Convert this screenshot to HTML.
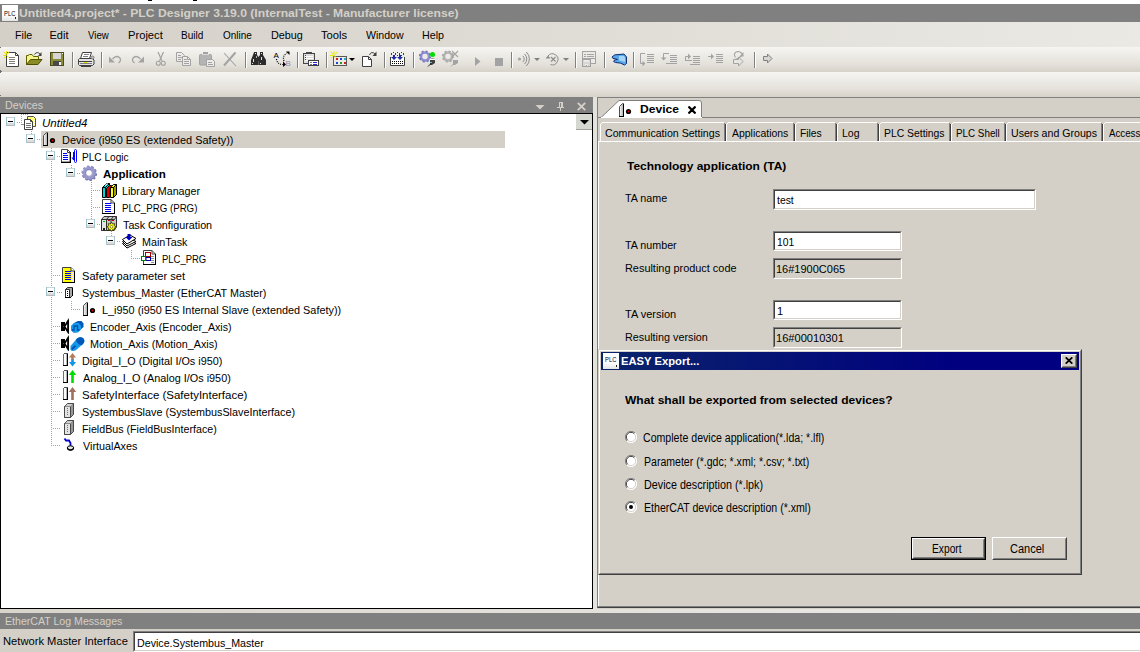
<!DOCTYPE html><html><head><meta charset="utf-8"><title>PLC Designer</title><style>html,body{margin:0;padding:0}body{width:1140px;height:652px;position:relative;overflow:hidden;background:#d4d0c8;font-family:'Liberation Sans',sans-serif;font-size:11px;line-height:13px;color:#000}div,span,svg{position:absolute}</style></head><body>
<div style="position:absolute;left:0px;top:0px;width:1140px;height:4px;background:#fff"></div>
<div style="position:absolute;left:148px;top:0px;width:4px;height:1px;background:#000"></div><div style="position:absolute;left:193px;top:0px;width:4px;height:1px;background:#000"></div>
<div style="position:absolute;left:0px;top:4px;width:1140px;height:18px;background:#808080"></div>
<div style="position:absolute;left:2px;top:5px;width:16px;height:16px;background:linear-gradient(#fff 60%,#e4e4e4)"><span style="left:2.17px;top:2px;font-size:7px;white-space:pre;color:#000;transform:scaleX(0.8333);transform-origin:0 0;">PLC</span><div style="position:absolute;left:13px;top:12px;width:1px;height:2px;background:#222"></div></div>
<span style="left:18.90px;top:7px;font-size:11px;white-space:pre;color:#d4d0c8;transform:scaleX(1.1033);transform-origin:0 0;font-weight:bold;">Untitled4.project* - PLC Designer 3.19.0 (InternalTest - Manufacturer license)</span>
<div style="position:absolute;left:0px;top:22px;width:1140px;height:25px;background:linear-gradient(to right,#d4d0c8,#ebe9e4)"></div>
<span style="left:15.03px;top:29px;font-size:11px;white-space:pre;color:#000;transform:scaleX(0.9688);transform-origin:0 0;">File</span>
<span style="left:49.50px;top:29px;font-size:11px;white-space:pre;color:#000;transform:scaleX(1.0000);transform-origin:0 0;">Edit</span>
<span style="left:88.00px;top:29px;font-size:11px;white-space:pre;color:#000;transform:scaleX(0.8750);transform-origin:0 0;">View</span>
<span style="left:127.98px;top:29px;font-size:11px;white-space:pre;color:#000;transform:scaleX(1.0152);transform-origin:0 0;">Project</span>
<span style="left:181.09px;top:29px;font-size:11px;white-space:pre;color:#000;transform:scaleX(0.9130);transform-origin:0 0;">Build</span>
<span style="left:223.00px;top:29px;font-size:11px;white-space:pre;color:#000;transform:scaleX(0.9062);transform-origin:0 0;">Online</span>
<span style="left:270.52px;top:29px;font-size:11px;white-space:pre;color:#000;transform:scaleX(0.9839);transform-origin:0 0;">Debug</span>
<span style="left:321.00px;top:29px;font-size:11px;white-space:pre;color:#000;transform:scaleX(1.0200);transform-origin:0 0;">Tools</span>
<span style="left:365.50px;top:29px;font-size:11px;white-space:pre;color:#000;transform:scaleX(0.9615);transform-origin:0 0;">Window</span>
<span style="left:421.52px;top:29px;font-size:11px;white-space:pre;color:#000;transform:scaleX(0.9762);transform-origin:0 0;">Help</span>
<div style="position:absolute;left:0px;top:47px;width:1140px;height:25px;background:linear-gradient(to bottom,#f6f5f2,#e4e1da 70%,#d6d2ca)"></div>
<div style="position:absolute;left:0px;top:72px;width:1140px;height:25px;background:linear-gradient(to bottom,#f6f5f2,#e4e1da 70%,#d6d2ca)"></div>
<div style="position:absolute;left:72px;top:52px;width:1px;height:16px;background:#808080"></div><div style="position:absolute;left:73px;top:52px;width:1px;height:16px;background:#fff"></div><div style="position:absolute;left:101px;top:52px;width:1px;height:16px;background:#808080"></div><div style="position:absolute;left:102px;top:52px;width:1px;height:16px;background:#fff"></div><div style="position:absolute;left:245px;top:52px;width:1px;height:16px;background:#808080"></div><div style="position:absolute;left:246px;top:52px;width:1px;height:16px;background:#fff"></div><div style="position:absolute;left:297px;top:52px;width:1px;height:16px;background:#808080"></div><div style="position:absolute;left:298px;top:52px;width:1px;height:16px;background:#fff"></div><div style="position:absolute;left:326px;top:52px;width:1px;height:16px;background:#808080"></div><div style="position:absolute;left:327px;top:52px;width:1px;height:16px;background:#fff"></div><div style="position:absolute;left:384px;top:52px;width:1px;height:16px;background:#808080"></div><div style="position:absolute;left:385px;top:52px;width:1px;height:16px;background:#fff"></div><div style="position:absolute;left:413px;top:52px;width:1px;height:16px;background:#808080"></div><div style="position:absolute;left:414px;top:52px;width:1px;height:16px;background:#fff"></div><div style="position:absolute;left:511px;top:52px;width:1px;height:16px;background:#808080"></div><div style="position:absolute;left:512px;top:52px;width:1px;height:16px;background:#fff"></div><div style="position:absolute;left:575px;top:52px;width:1px;height:16px;background:#808080"></div><div style="position:absolute;left:576px;top:52px;width:1px;height:16px;background:#fff"></div><div style="position:absolute;left:604px;top:52px;width:1px;height:16px;background:#808080"></div><div style="position:absolute;left:605px;top:52px;width:1px;height:16px;background:#fff"></div><div style="position:absolute;left:633px;top:52px;width:1px;height:16px;background:#808080"></div><div style="position:absolute;left:634px;top:52px;width:1px;height:16px;background:#fff"></div><div style="position:absolute;left:754px;top:52px;width:1px;height:16px;background:#808080"></div><div style="position:absolute;left:755px;top:52px;width:1px;height:16px;background:#fff"></div><svg style="position:absolute;left:0;top:47px" width="1140" height="25" viewBox="0 47 1140 25"><g shape-rendering="auto"><path d="M6.5 52.5 H15.5 L18.5 55.5 V66.5 H6.5Z" fill="#fff" stroke="#404040"/><path d="M15.5 52.5 V55.5 H18.5" fill="none" stroke="#404040"/><rect x="9" y="57" width="6" height="1" fill="#808080"/><rect x="9" y="59" width="6" height="1" fill="#808080"/><rect x="9" y="61" width="6" height="1" fill="#808080"/><rect x="9" y="63" width="6" height="1" fill="#808080"/><path d="M3.5 51.5 L8.5 57.5 M6.5 51 V54 M9.5 51.5 L7 54.5 M3 55.5 H6 M3.5 58.5 L5.5 56.5" stroke="#e6e600" stroke-width="1" fill="none"/><path d="M26.5 64.5 V55.5 H28 L29.5 54.5 H32 L33.5 56.5 H38.5 V59" fill="#f4f48c" stroke="#606000"/><path d="M26.5 64.5 L30.5 59.5 H42 L38 64.5Z" fill="#8c8c28" stroke="#505000"/><path d="M34.5 54.5 Q37 50.5 40.5 54.5" fill="none" stroke="#404040"/><path d="M41.5 52 V56 H38Z" fill="#404040"/><rect x="50" y="52" width="14" height="14" fill="#4c4c18"/><rect x="51" y="53" width="12" height="12" fill="#8c8c38"/><rect x="53" y="53" width="8" height="6" fill="#d6d6d6"/><rect x="53" y="61" width="8" height="5" fill="#484848"/><rect x="59" y="62" width="2" height="3" fill="#f0f0f0"/><rect x="62" y="53" width="1" height="1" fill="#fff"/><path d="M82.5 52.5 H91.5 L89.5 58.5 H80.5Z" fill="#fff" stroke="#404040"/><rect x="84" y="54" width="5" height="1" fill="#808080"/><rect x="83" y="56" width="5" height="1" fill="#808080"/><path d="M79.5 58.5 H92.5 L94 60 V64 L92.5 65.5 H79.5 L78.5 64.5 V59.5Z" fill="#e4e4e4" stroke="#404040"/><rect x="79" y="61" width="13" height="1" fill="#404040"/><rect x="84" y="62" width="3" height="1" fill="#e8e000"/><rect x="80" y="63" width="12" height="1" fill="#808080"/><rect x="81" y="66" width="10" height="1" fill="#404040"/><circle cx="92.5" cy="57.5" r="1.5" fill="#c0c0c0" stroke="#606060" stroke-width=".7"/><path d="M109 56.5 V62.5 H115Z" fill="#a3a3a3"/><path d="M112.5 59 Q116 55 119.5 57.5 Q122 60.5 118.5 63" fill="none" stroke="#a3a3a3" stroke-width="1.3"/><path d="M144 56.5 V62.5 H138Z" fill="#a3a3a3"/><path d="M140.5 59 Q137 55 133.5 57.5 Q131 60.5 134.5 63" fill="none" stroke="#a3a3a3" stroke-width="1.3"/><path d="M158 52 L162 61 M163.5 52 L159.5 61" stroke="#a3a3a3" stroke-width="1.2" fill="none"/><circle cx="158.3" cy="63.3" r="2" fill="none" stroke="#a3a3a3" stroke-width="1.1"/><circle cx="163.3" cy="63.3" r="2" fill="none" stroke="#a3a3a3" stroke-width="1.1"/><path d="M176.5 52.5 H181.5 L184.5 55.5 V61.5 H176.5Z" fill="#ecebe8" stroke="#a3a3a3"/><path d="M182.5 56.5 H187.5 L190.5 59.5 V65.5 H182.5Z" fill="#ecebe8" stroke="#a3a3a3"/><rect x="178" y="55" width="3" height="1" fill="#a3a3a3"/><rect x="178" y="57" width="4" height="1" fill="#a3a3a3"/><rect x="178" y="59" width="3" height="1" fill="#a3a3a3"/><rect x="184" y="59" width="3" height="1" fill="#a3a3a3"/><rect x="184" y="61" width="5" height="1" fill="#a3a3a3"/><rect x="184" y="63" width="5" height="1" fill="#a3a3a3"/><path d="M187.5 56.5 V59.5 H190.5" fill="none" stroke="#a3a3a3"/><rect x="199.5" y="54.5" width="12" height="10.5" rx="1" fill="#b4b4b4" stroke="#a3a3a3"/><rect x="203" y="52" width="5" height="2" fill="#a3a3a3"/><rect x="202" y="54" width="7" height="1" fill="#d8d8d8"/><path d="M206.500 59.5 H212.5 L214.5 61.5 V66.5 H206.5Z" fill="#ecebe8" stroke="#a3a3a3"/><rect x="208" y="62" width="4" height="1" fill="#a3a3a3"/><rect x="208" y="64" width="5" height="1" fill="#a3a3a3"/><path d="M224 53 L236 66" stroke="#a3a3a3" stroke-width="1.1"/><path d="M235.5 52.5 L224 65.5" stroke="#a3a3a3" stroke-width="2"/><path d="M254 52 h3 v3 l1.500 2 v8 h-7.500 v-5 l2 -5z" fill="#2c2c2c"/><path d="M260 52 h3 v3 l3 5 v5 h-7.500 v-8 l1.500 -2z" fill="#2c2c2c"/><rect x="257" y="57" width="3" height="4" fill="#2c2c2c"/><rect x="253" y="59" width="1" height="3" fill="#e0e0e0"/><rect x="255" y="53" width="1" height="1" fill="#e0e0e0"/><rect x="261" y="53" width="1" height="1" fill="#e0e0e0"/><rect x="261" y="57" width="1" height="3" fill="#e0e0e0"/><rect x="252" y="63" width="1" height="1" fill="#e0e0e0"/><rect x="260" y="63" width="1" height="1" fill="#e0e0e0"/><rect x="256" y="56" width="1" height="2" fill="#b0b0b0"/><text x="273.500" y="58" font-size="8" font-family="Liberation Sans, sans-serif" fill="#000">A</text><text x="285.500" y="66" font-size="8" font-family="Liberation Sans, sans-serif" fill="#9090b0">B</text><path d="M276.500 59 Q277 64.500 283 64.500" fill="none" stroke="#000" stroke-width="1.2" stroke-dasharray="1 1.2"/><path d="M283 61.500 L286 64.500 L283 67Z" fill="#000"/><path d="M284 61 Q282 56 287 53" fill="none" stroke="#000" stroke-width="1.2" stroke-dasharray="1 1.2"/><path d="M286 51.500 H289.500 V55Z" fill="#000"/><rect x="303.500" y="53.500" width="11" height="10" fill="#dcdcdc" stroke="#484848"/><rect x="306" y="52" width="6" height="2" fill="#484848"/><rect x="305" y="56" width="8" height="1" fill="#fff"/><rect x="305" y="58" width="8" height="1" fill="#fff"/><rect x="305" y="60" width="3" height="1" fill="#fff"/><rect x="305" y="55" width="1" height="1" fill="#484848"/><rect x="305" y="57" width="1" height="1" fill="#484848"/><rect x="305" y="59" width="1" height="1" fill="#484848"/><rect x="308.500" y="60.500" width="10" height="5" fill="#fff" stroke="#404040"/><rect x="310" y="62" width="2" height="1" fill="#808080"/><rect x="313" y="62" width="4" height="1" fill="#2828c8"/><rect x="310" y="64" width="2" height="1" fill="#808080"/><rect x="313" y="64" width="4" height="1" fill="#2828c8"/><rect x="333.500" y="56.500" width="13" height="9" fill="#ecebe8" stroke="#585858"/><rect x="336" y="58" width="2" height="2" fill="#d02020"/><rect x="340" y="58" width="2" height="2" fill="#2040d0"/><rect x="344" y="58" width="2" height="2" fill="#20b0c0"/><rect x="336" y="62" width="2" height="2" fill="#2040d0"/><rect x="340" y="62" width="2" height="2" fill="#20a020"/><rect x="344" y="62" width="2" height="2" fill="#d02020"/><path d="M330.500 51.500 L336 57.500 M334 51 V54.500 M337.500 51.500 L335 54.500 M330 55.500 H333.500 M331 58.500 L333 56.500" stroke="#e6e600" stroke-width="1" fill="none"/><path d="M349 58 H355 L352 61Z" fill="#000"/><path d="M362.500 56.500 H368.500 L371.500 59.500 V66.500 H362.500Z" fill="#fff" stroke="#404040"/><path d="M368.500 56.500 V59.500 H371.500" fill="none" stroke="#404040"/><path d="M369.500 55 Q371.500 50.500 375 54" fill="none" stroke="#404040"/><path d="M376.500 51.500 V56 H372.500Z" fill="#404040"/><rect x="391" y="53" width="1" height="1" fill="#2030c0"/><rect x="391" y="54" width="1" height="1" fill="#2030c0"/><rect x="393" y="52" width="1" height="1" fill="#2030c0"/><rect x="393" y="55" width="1" height="1" fill="#2030c0"/><rect x="395" y="53" width="1" height="1" fill="#2030c0"/><rect x="395" y="54" width="1" height="1" fill="#2030c0"/><rect x="397" y="52" width="1" height="1" fill="#2030c0"/><rect x="397" y="55" width="1" height="1" fill="#2030c0"/><rect x="399" y="53" width="1" height="1" fill="#2030c0"/><rect x="399" y="54" width="1" height="1" fill="#2030c0"/><rect x="401" y="52" width="1" height="1" fill="#2030c0"/><rect x="401" y="55" width="1" height="1" fill="#2030c0"/><rect x="403" y="53" width="1" height="1" fill="#2030c0"/><rect x="403" y="54" width="1" height="1" fill="#2030c0"/><path d="M393 55 h2 v2 h2 l-3 3 l-3 -3 h2z M399 55 h2 v2 h2 l-3 3 l-3 -3 h2z" fill="#1c2ca8"/><path d="M390.500 57 V65.500 H404.500 V57" fill="#fff" stroke="#404040"/><path d="M393 55 h2 v2 h2 l-3 3 l-3 -3 h2z M399 55 h2 v2 h2 l-3 3 l-3 -3 h2z" fill="#1c2ca8"/><rect x="392" y="61" width="1" height="1" fill="#000"/><rect x="394" y="61" width="1" height="1" fill="#000"/><rect x="396" y="61" width="1" height="1" fill="#000"/><rect x="398" y="61" width="1" height="1" fill="#000"/><rect x="400" y="61" width="1" height="1" fill="#000"/><rect x="402" y="61" width="1" height="1" fill="#000"/><rect x="392" y="63" width="1" height="1" fill="#000"/><rect x="394" y="63" width="1" height="1" fill="#000"/><rect x="396" y="63" width="1" height="1" fill="#000"/><rect x="398" y="63" width="1" height="1" fill="#000"/><rect x="400" y="63" width="1" height="1" fill="#000"/><rect x="402" y="63" width="1" height="1" fill="#000"/><circle cx="425" cy="56.5" r="4" fill="none" stroke="#8e8ed0" stroke-width="2.600"/><circle cx="425" cy="56.5" r="5.300" fill="none" stroke="#7878c0" stroke-width="1.600" stroke-dasharray="2.080 2.080"/><circle cx="432.500" cy="54.500" r="2.500" fill="#00e000"/><rect x="430" y="58" width="5" height="2" fill="#fff"/><path d="M430.500 58.500 H434.500" stroke="#606060" stroke-width=".6"/><path d="M430 60 H435 V63 L432 65 H430Z" fill="#404040"/><path d="M428 66.500 L432 62.500" stroke="#202020" stroke-width="1"/><rect x="430" y="62" width="2" height="1" fill="#60c0c0"/><circle cx="448" cy="56.5" r="4" fill="none" stroke="#b4b4b4" stroke-width="2.600"/><circle cx="448" cy="56.5" r="5.300" fill="none" stroke="#a8a8a8" stroke-width="1.600" stroke-dasharray="2.080 2.080"/><path d="M452 51 L458 57 M458 51 L452 57" stroke="#a3a3a3" stroke-width="1.1"/><rect x="453" y="58" width="5" height="2" fill="#e8e8e8"/><path d="M453 60 H458 V63 L455 65 H453Z" fill="#a3a3a3"/><path d="M451 66.500 L455 62.500" stroke="#a3a3a3" stroke-width="1"/><path d="M475 57 L480.500 61.500 L475 66Z" fill="#a3a3a3"/><rect x="495" y="58" width="8" height="8" fill="#a3a3a3"/><circle cx="519.500" cy="59" r="1.600" fill="#a3a3a3"/><path d="M522.81 55.88 A4.2 4.2 0 0 1 522.81 62.12" fill="none" stroke="#8c8c8c" stroke-width="1"/><path d="M524.55 53.95 A6.8 6.8 0 0 1 524.55 64.05" fill="none" stroke="#8c8c8c" stroke-width="1"/><path d="M526.29 52.01 A9.4 9.4 0 0 1 526.29 65.99" fill="none" stroke="#8c8c8c" stroke-width="1"/><path d="M534 58 H540 L537 61Z" fill="#808080"/><path d="M563 58 H569 L566 61Z" fill="#808080"/><path d="M548 56 A5.500 5.500 0 1 1 550.500 64.500" fill="none" stroke="#8c8c8c" stroke-width="1"/><path d="M545.500 58.500 H550.500 L548 55.500Z" fill="#8c8c8c"/><path d="M551 57 L555.500 61.500 M555.500 57 L551 61.500" stroke="#8c8c8c" stroke-width="1.100"/><rect x="582.500" y="51.500" width="13" height="12" fill="#eceae6" stroke="#a3a3a3"/><rect x="584" y="54" width="2" height="1" fill="#a3a3a3"/><rect x="587" y="54" width="7" height="1" fill="#a3a3a3"/><rect x="584" y="56" width="2" height="1" fill="#a3a3a3"/><rect x="587" y="56" width="7" height="1" fill="#a3a3a3"/><rect x="583" y="58" width="13" height="1" fill="#a3a3a3"/><rect x="582.500" y="59.500" width="8" height="7" fill="#d8d6d2" stroke="#a3a3a3"/><rect x="584" y="60" width="5" height="2" fill="#eceae6"/><rect x="585" y="64" width="3" height="2" fill="#eceae6"/><rect x="586" y="65" width="1" height="1" fill="#a3a3a3"/><path d="M612 57 Q614 54 619 54.500 L624 54 L626.500 57 V63.500 L624.500 65 Q621 62.500 615.500 62.500 Q612.500 62 614.500 60 L617.500 59.500 Q615.500 58.500 613 58.500Z" fill="#58a8e8" stroke="#0c2c78" stroke-width="1"/><path d="M619 56 H624 L625 58 V62 Q621 60.500 619 60.500Z" fill="#a8d4f4"/><path d="M645 53.500 H640.500 V63.500 H643" fill="none" stroke="#a3a3a3"/><path d="M642.500 61 L645.500 63.500 L642.500 66.500Z" fill="#a3a3a3"/><rect x="647" y="54" width="7" height="1" fill="#a3a3a3"/><rect x="647" y="56" width="7" height="1" fill="#a3a3a3"/><rect x="647" y="58" width="7" height="1" fill="#a3a3a3"/><rect x="647" y="60" width="7" height="1" fill="#a3a3a3"/><rect x="647" y="62" width="7" height="1" fill="#a3a3a3"/><path d="M669 53.500 H663.500 V58" fill="none" stroke="#a3a3a3"/><path d="M661 57.500 H666.500 L663.500 60.500Z" fill="#a3a3a3"/><rect x="670" y="55" width="7" height="1" fill="#a3a3a3"/><rect x="670" y="57" width="7" height="1" fill="#a3a3a3"/><rect x="670" y="59" width="7" height="1" fill="#a3a3a3"/><rect x="670" y="61" width="7" height="1" fill="#a3a3a3"/><rect x="666" y="63" width="11" height="1" fill="#a3a3a3"/><path d="M685.500 60.500 V56.500 H689" fill="none" stroke="#a3a3a3"/><path d="M688 53.500 L691 56.500 L688 59.500Z" fill="#a3a3a3"/><rect x="685" y="60" width="7" height="1" fill="#a3a3a3"/><rect x="693" y="56" width="7" height="1" fill="#a3a3a3"/><rect x="693" y="58" width="7" height="1" fill="#a3a3a3"/><rect x="693" y="60" width="7" height="1" fill="#a3a3a3"/><rect x="693" y="62" width="7" height="1" fill="#a3a3a3"/><rect x="690" y="64" width="10" height="1" fill="#a3a3a3"/><path d="M708 56.500 H712" stroke="#a3a3a3"/><path d="M711 53.500 L714 56.500 L711 59.500Z" fill="#a3a3a3"/><rect x="716" y="54" width="7" height="1" fill="#a3a3a3"/><rect x="716" y="56" width="7" height="1" fill="#a3a3a3"/><rect x="716" y="58" width="7" height="1" fill="#a3a3a3"/><rect x="716" y="60" width="7" height="1" fill="#a3a3a3"/><rect x="716" y="62" width="7" height="1" fill="#a3a3a3"/><path d="M735.500 57.500 Q732.500 53 737.500 51.500 Q741 51.500 742 54" fill="none" stroke="#a3a3a3" stroke-width="1.100"/><path d="M743.500 52 V56.500 H739.500Z" fill="#a3a3a3"/><path d="M741.500 56 L736 59.500" stroke="#a3a3a3" stroke-width="1.100"/><path d="M733.500 59.500 H738.500 V57 L743 61.500 L738.500 66 V63.500 H733.500Z" fill="#e8e6e2" stroke="#a3a3a3"/><path d="M763.500 56.500 H767.500 V54 L772 58.500 L767.500 63 V60.500 H763.500Z" fill="#d8d6d2" stroke="#808080"/></g></svg>
<div style="position:absolute;left:0px;top:47px;width:1px;height:1px;background:#707070"></div><div style="position:absolute;left:0px;top:70px;width:1px;height:3px;background:#707070"></div><div style="position:absolute;left:1px;top:71px;width:1px;height:1px;background:#707070"></div><div style="position:absolute;left:0px;top:95px;width:1px;height:1px;background:#707070"></div>
<div style="position:absolute;left:0px;top:97px;width:593px;height:16px;background:#808080"></div>
<span style="left:5.03px;top:99px;font-size:11px;white-space:pre;color:#d4d0c8;transform:scaleX(0.9737);transform-origin:0 0;">Devices</span>
<div style="position:absolute;left:0px;top:113px;width:593px;height:496px;background:#fff;box-sizing:border-box;border:1px solid #000"></div>
<div style="position:absolute;left:41px;top:131px;width:464px;height:17px;background:#d4d0c8"></div><div style="position:absolute;left:21px;top:114px;width:7px;height:1px;background:repeating-linear-gradient(to right,#a4a4a4 0 1px,transparent 1px 2px)"></div><div style="position:absolute;left:21px;top:116px;width:1px;height:8px;background:repeating-linear-gradient(to bottom,#a4a4a4 0 1px,transparent 1px 2px)"></div><div style="position:absolute;left:21px;top:124px;width:4px;height:1px;background:#909090"></div><div style="position:absolute;left:17px;top:122px;width:5px;height:1px;background:repeating-linear-gradient(to right,#a4a4a4 0 1px,transparent 1px 2px)"></div><div style="position:absolute;left:31px;top:131px;width:1px;height:3px;background:repeating-linear-gradient(to bottom,#a4a4a4 0 1px,transparent 1px 2px)"></div><div style="position:absolute;left:37px;top:139px;width:5px;height:1px;background:repeating-linear-gradient(to right,#a4a4a4 0 1px,transparent 1px 2px)"></div><div style="position:absolute;left:51px;top:148px;width:1px;height:3px;background:repeating-linear-gradient(to bottom,#a4a4a4 0 1px,transparent 1px 2px)"></div><div style="position:absolute;left:51px;top:161px;width:1px;height:286px;background:repeating-linear-gradient(to bottom,#a4a4a4 0 1px,transparent 1px 2px)"></div><div style="position:absolute;left:57px;top:156px;width:4px;height:1px;background:repeating-linear-gradient(to right,#a4a4a4 0 1px,transparent 1px 2px)"></div><div style="position:absolute;left:71px;top:165px;width:1px;height:3px;background:repeating-linear-gradient(to bottom,#a4a4a4 0 1px,transparent 1px 2px)"></div><div style="position:absolute;left:77px;top:173px;width:4px;height:1px;background:repeating-linear-gradient(to right,#a4a4a4 0 1px,transparent 1px 2px)"></div><div style="position:absolute;left:91px;top:182px;width:1px;height:37px;background:repeating-linear-gradient(to bottom,#a4a4a4 0 1px,transparent 1px 2px)"></div><div style="position:absolute;left:93px;top:190px;width:8px;height:1px;background:repeating-linear-gradient(to right,#a4a4a4 0 1px,transparent 1px 2px)"></div><div style="position:absolute;left:93px;top:207px;width:8px;height:1px;background:repeating-linear-gradient(to right,#a4a4a4 0 1px,transparent 1px 2px)"></div><div style="position:absolute;left:97px;top:224px;width:4px;height:1px;background:repeating-linear-gradient(to right,#a4a4a4 0 1px,transparent 1px 2px)"></div><div style="position:absolute;left:111px;top:233px;width:1px;height:3px;background:repeating-linear-gradient(to bottom,#a4a4a4 0 1px,transparent 1px 2px)"></div><div style="position:absolute;left:117px;top:241px;width:4px;height:1px;background:repeating-linear-gradient(to right,#a4a4a4 0 1px,transparent 1px 2px)"></div><div style="position:absolute;left:131px;top:250px;width:1px;height:9px;background:repeating-linear-gradient(to bottom,#a4a4a4 0 1px,transparent 1px 2px)"></div><div style="position:absolute;left:131px;top:258px;width:10px;height:1px;background:repeating-linear-gradient(to right,#a4a4a4 0 1px,transparent 1px 2px)"></div><div style="position:absolute;left:53px;top:275px;width:8px;height:1px;background:repeating-linear-gradient(to right,#a4a4a4 0 1px,transparent 1px 2px)"></div><div style="position:absolute;left:53px;top:326px;width:8px;height:1px;background:repeating-linear-gradient(to right,#a4a4a4 0 1px,transparent 1px 2px)"></div><div style="position:absolute;left:53px;top:343px;width:8px;height:1px;background:repeating-linear-gradient(to right,#a4a4a4 0 1px,transparent 1px 2px)"></div><div style="position:absolute;left:53px;top:360px;width:8px;height:1px;background:repeating-linear-gradient(to right,#a4a4a4 0 1px,transparent 1px 2px)"></div><div style="position:absolute;left:53px;top:377px;width:8px;height:1px;background:repeating-linear-gradient(to right,#a4a4a4 0 1px,transparent 1px 2px)"></div><div style="position:absolute;left:53px;top:394px;width:8px;height:1px;background:repeating-linear-gradient(to right,#a4a4a4 0 1px,transparent 1px 2px)"></div><div style="position:absolute;left:53px;top:411px;width:8px;height:1px;background:repeating-linear-gradient(to right,#a4a4a4 0 1px,transparent 1px 2px)"></div><div style="position:absolute;left:53px;top:428px;width:8px;height:1px;background:repeating-linear-gradient(to right,#a4a4a4 0 1px,transparent 1px 2px)"></div><div style="position:absolute;left:53px;top:445px;width:8px;height:1px;background:repeating-linear-gradient(to right,#a4a4a4 0 1px,transparent 1px 2px)"></div><div style="position:absolute;left:57px;top:292px;width:6px;height:1px;background:repeating-linear-gradient(to right,#a4a4a4 0 1px,transparent 1px 2px)"></div><div style="position:absolute;left:71px;top:301px;width:1px;height:9px;background:repeating-linear-gradient(to bottom,#a4a4a4 0 1px,transparent 1px 2px)"></div><div style="position:absolute;left:71px;top:309px;width:10px;height:1px;background:repeating-linear-gradient(to right,#a4a4a4 0 1px,transparent 1px 2px)"></div><svg style="position:absolute;left:6px;top:117px" width="9" height="9" viewBox="0 0 9 9" shape-rendering="crispEdges" ><rect x="0" y="0" width="9" height="9" fill="#a4c4cc"/><rect x="1" y="0" width="7" height="1" fill="#c4d8dc"/><rect x="1" y="8" width="7" height="1" fill="#b4b8b8"/><rect x="1" y="1" width="7" height="7" fill="#fff"/><rect x="1" y="5" width="7" height="1" fill="#f0f0f0"/><rect x="1" y="6" width="7" height="2" fill="#dcdcdc"/><rect x="2" y="4" width="5" height="1" fill="#000"/></svg><svg style="position:absolute;left:21px;top:114px" width="16" height="16" viewBox="0 0 16 16" shape-rendering="crispEdges" ><g shape-rendering="auto"><path d="M6.500 2.500 H12.500 L14.500 4.500 V12.500 H6.500Z" fill="#ffff70" stroke="#505050"/></g><g shape-rendering="auto"><path d="M3.500 5.500 H9.500 L11.500 7.500 V15.500 H3.500Z" fill="#fff" stroke="#404040"/><path d="M9.500 5.500 V7.500 H11.500" fill="none" stroke="#404040"/></g><rect x="5" y="9" width="5" height="1" fill="#707070"/><rect x="5" y="11" width="5" height="1" fill="#707070"/><rect x="5" y="13" width="5" height="1" fill="#707070"/><rect x="8" y="3" width="1" height="1" fill="#fff"/><rect x="10" y="3" width="1" height="1" fill="#fff"/><rect x="12" y="5" width="1" height="1" fill="#fff"/><rect x="13" y="6" width="1" height="1" fill="#fff"/><rect x="12" y="7" width="1" height="1" fill="#fff"/><rect x="13" y="8" width="1" height="1" fill="#fff"/><rect x="12" y="9" width="1" height="1" fill="#fff"/><rect x="13" y="10" width="1" height="1" fill="#fff"/></svg><span style="left:41.95px;top:117px;font-size:11px;white-space:pre;color:#000;transform:scaleX(1.0476);transform-origin:0 0;font-style:italic;">Untitled4</span><svg style="position:absolute;left:26px;top:134px" width="9" height="9" viewBox="0 0 9 9" shape-rendering="crispEdges" ><rect x="0" y="0" width="9" height="9" fill="#a4c4cc"/><rect x="1" y="0" width="7" height="1" fill="#c4d8dc"/><rect x="1" y="8" width="7" height="1" fill="#b4b8b8"/><rect x="1" y="1" width="7" height="7" fill="#fff"/><rect x="1" y="5" width="7" height="1" fill="#f0f0f0"/><rect x="1" y="6" width="7" height="2" fill="#dcdcdc"/><rect x="2" y="4" width="5" height="1" fill="#000"/></svg><svg style="position:absolute;left:41px;top:131px" width="16" height="16" viewBox="0 0 16 16" shape-rendering="crispEdges" ><defs><linearGradient id="gd" x1="0" x2="1" y1="0" y2="0"><stop offset="0" stop-color="#fff"/><stop offset="1" stop-color="#a8a8a8"/></linearGradient></defs><g shape-rendering="auto"><path d="M2.5 4.500 L5.5 1.500 H6.5 V14.500 H2.5Z" fill="url(#gd)" stroke="#505050" stroke-width="1"/></g><rect x="6" y="2" width="1" height="13" fill="#000"/><rect x="2" y="14" width="5" height="1" fill="#000"/><g shape-rendering="auto"><circle cx="11.5" cy="9.500" r="2.600" fill="#000"/><circle cx="11.5" cy="9.500" r="0.900" fill="#f00000"/></g></svg><span style="left:62.01px;top:134px;font-size:11px;white-space:pre;color:#000;transform:scaleX(0.9942);transform-origin:0 0;">Device (i950 ES (extended Safety))</span><svg style="position:absolute;left:46px;top:151px" width="9" height="9" viewBox="0 0 9 9" shape-rendering="crispEdges" ><rect x="0" y="0" width="9" height="9" fill="#a4c4cc"/><rect x="1" y="0" width="7" height="1" fill="#c4d8dc"/><rect x="1" y="8" width="7" height="1" fill="#b4b8b8"/><rect x="1" y="1" width="7" height="7" fill="#fff"/><rect x="1" y="5" width="7" height="1" fill="#f0f0f0"/><rect x="1" y="6" width="7" height="2" fill="#dcdcdc"/><rect x="2" y="4" width="5" height="1" fill="#000"/></svg><svg style="position:absolute;left:61px;top:148px" width="16" height="16" viewBox="0 0 16 16" shape-rendering="crispEdges" ><g shape-rendering="auto"><path d="M0.500 1.500 H6.500 L9 4 V14 H0.500Z" fill="#fff" stroke="#404040"/><path d="M6.500 1.500 V4.500 H9.500" fill="none" stroke="#404040"/></g><rect x="9" y="4" width="1" height="11" fill="#000"/><rect x="0" y="14" width="10" height="1" fill="#000"/><rect x="2" y="5" width="4" height="1" fill="#0000ff"/><rect x="2" y="7" width="5" height="1" fill="#0000ff"/><rect x="2" y="9" width="5" height="1" fill="#0000ff"/><rect x="2" y="11" width="5" height="1" fill="#0000ff"/><g shape-rendering="auto"><rect x="13.500" y="1.500" width="2" height="13" rx="1" fill="#fff" stroke="#0000ff"/><path d="M10.500 9.500 L12.500 12.500 L13 9.500Z" fill="#0000ff"/></g><rect x="12" y="4" width="1" height="8" fill="#0000ff"/></svg><span style="left:82.08px;top:151px;font-size:11px;white-space:pre;color:#000;transform:scaleX(0.9184);transform-origin:0 0;">PLC Logic</span><svg style="position:absolute;left:66px;top:168px" width="9" height="9" viewBox="0 0 9 9" shape-rendering="crispEdges" ><rect x="0" y="0" width="9" height="9" fill="#a4c4cc"/><rect x="1" y="0" width="7" height="1" fill="#c4d8dc"/><rect x="1" y="8" width="7" height="1" fill="#b4b8b8"/><rect x="1" y="1" width="7" height="7" fill="#fff"/><rect x="1" y="5" width="7" height="1" fill="#f0f0f0"/><rect x="1" y="6" width="7" height="2" fill="#dcdcdc"/><rect x="2" y="4" width="5" height="1" fill="#000"/></svg><svg style="position:absolute;left:81px;top:165px" width="16" height="16" viewBox="0 0 16 16" shape-rendering="crispEdges" ><g shape-rendering="auto"><path d="M14.04 9.42 L16.02 9.72" stroke="#686890" stroke-width="2.300"/><path d="M12.52 12.46 L13.94 13.87" stroke="#686890" stroke-width="2.300"/><path d="M9.50 14.03 L9.83 16.00" stroke="#686890" stroke-width="2.300"/><path d="M6.14 13.52 L5.24 15.31" stroke="#686890" stroke-width="2.300"/><path d="M3.72 11.13 L1.94 12.05" stroke="#686890" stroke-width="2.300"/><path d="M3.16 7.78 L1.18 7.48" stroke="#686890" stroke-width="2.300"/><path d="M4.68 4.74 L3.26 3.33" stroke="#686890" stroke-width="2.300"/><path d="M7.70 3.17 L7.37 1.20" stroke="#686890" stroke-width="2.300"/><path d="M11.06 3.68 L11.96 1.89" stroke="#686890" stroke-width="2.300"/><path d="M13.48 6.07 L15.26 5.15" stroke="#686890" stroke-width="2.300"/><circle cx="8.600" cy="8.600" r="4.900" fill="none" stroke="#686890" stroke-width="2.800"/><path d="M13.44 8.82 L15.42 9.12" stroke="#9090c8" stroke-width="2.300"/><path d="M11.92 11.86 L13.34 13.27" stroke="#9090c8" stroke-width="2.300"/><path d="M8.90 13.43 L9.23 15.40" stroke="#9090c8" stroke-width="2.300"/><path d="M5.54 12.92 L4.64 14.71" stroke="#9090c8" stroke-width="2.300"/><path d="M3.12 10.53 L1.34 11.45" stroke="#9090c8" stroke-width="2.300"/><path d="M2.56 7.18 L0.58 6.88" stroke="#9090c8" stroke-width="2.300"/><path d="M4.08 4.14 L2.66 2.73" stroke="#9090c8" stroke-width="2.300"/><path d="M7.10 2.57 L6.77 0.60" stroke="#9090c8" stroke-width="2.300"/><path d="M10.46 3.08 L11.36 1.29" stroke="#9090c8" stroke-width="2.300"/><path d="M12.88 5.47 L14.66 4.55" stroke="#9090c8" stroke-width="2.300"/><circle cx="8" cy="8" r="4.900" fill="none" stroke="#9898d0" stroke-width="2.800"/><circle cx="8" cy="8" r="3.300" fill="#fff" stroke="#7878a8" stroke-width=".7"/></g></svg><span style="left:103.00px;top:168px;font-size:11px;white-space:pre;color:#000;transform:scaleX(1.0508);transform-origin:0 0;font-weight:bold;">Application</span><svg style="position:absolute;left:101px;top:182px" width="16" height="16" viewBox="0 0 16 16" shape-rendering="crispEdges" ><g shape-rendering="auto"><path d="M1.500 5.500 L5.500 1.500 H8.500 V12 L4.500 15.500 H1.500Z" fill="#00d8d8" stroke="#000" stroke-width="1" stroke-linejoin="round"/><path d="M4.500 5.500 V15.500 M1.500 5.500 H4.500 L8.500 1.500" fill="none" stroke="#000" stroke-width="1" stroke-linejoin="round"/><path d="M4 3.500 L6.500 1.500" stroke="#fff" stroke-width="1"/><path d="M5.500 6.500 L8.500 3.500 H10.500 V13 L8.500 15.500 H5.500Z" fill="#e00000" stroke="#000" stroke-width="1" stroke-linejoin="round"/><path d="M8.500 6.500 V15.500" fill="none" stroke="#800000"/><path d="M9.500 5.500 L12.500 2.500 H15.500 V12.500 L12.500 15.500 H9.500Z" fill="#ffff00" stroke="#000" stroke-width="1" stroke-linejoin="round"/><path d="M12.500 5.500 L15.500 2.500 V12.500 L12.500 15.500Z" fill="#a0a000" stroke="#000" stroke-width="1" stroke-linejoin="round"/><path d="M9.500 5.500 H12.500" stroke="#000" stroke-width="1" stroke-linejoin="round"/></g></svg><span style="left:122.03px;top:185px;font-size:11px;white-space:pre;color:#000;transform:scaleX(0.9747);transform-origin:0 0;">Library Manager</span><svg style="position:absolute;left:101px;top:199px" width="16" height="16" viewBox="0 0 16 16" shape-rendering="crispEdges" ><g shape-rendering="auto"><path d="M1.500 0.500 H10 L13.500 4 V14.500 H1.500Z" fill="#fff" stroke="#404040"/><path d="M10 0.500 V4 H13.500" fill="none" stroke="#404040"/></g><rect x="13" y="4" width="1" height="11" fill="#000"/><rect x="1" y="14" width="13" height="1" fill="#000"/><rect x="4" y="4" width="6" height="1" fill="#0000ff"/><rect x="4" y="6" width="6" height="1" fill="#0000ff"/><rect x="4" y="8" width="6" height="1" fill="#0000ff"/><rect x="4" y="10" width="6" height="1" fill="#0000ff"/><rect x="4" y="12" width="6" height="1" fill="#0000ff"/></svg><span style="left:122.12px;top:202px;font-size:11px;white-space:pre;color:#000;transform:scaleX(0.8810);transform-origin:0 0;">PLC_PRG (PRG)</span><svg style="position:absolute;left:86px;top:219px" width="9" height="9" viewBox="0 0 9 9" shape-rendering="crispEdges" ><rect x="0" y="0" width="9" height="9" fill="#a4c4cc"/><rect x="1" y="0" width="7" height="1" fill="#c4d8dc"/><rect x="1" y="8" width="7" height="1" fill="#b4b8b8"/><rect x="1" y="1" width="7" height="7" fill="#fff"/><rect x="1" y="5" width="7" height="1" fill="#f0f0f0"/><rect x="1" y="6" width="7" height="2" fill="#dcdcdc"/><rect x="2" y="4" width="5" height="1" fill="#000"/></svg><svg style="position:absolute;left:101px;top:216px" width="16" height="16" viewBox="0 0 16 16" shape-rendering="crispEdges" ><g shape-rendering="auto"><path d="M0.500 3.500 L3 0.500 H15.500 V11 L13 14.500 H0.500Z" fill="#c8c8c8" stroke="#303030" stroke-width="1" stroke-linejoin="round"/><path d="M0.500 3.500 H5.500 V14.500 H0.500Z" fill="#e4e4e4" stroke="#303030" stroke-width="1" stroke-linejoin="round"/><path d="M5.500 3.500 L8 0.500 M5.500 3.500 H10 V10 M10 3.500 L12.500 0.500 M10 3.500 H13.500 L15.500 0.500" fill="none" stroke="#303030" stroke-width="1" stroke-linejoin="round"/></g><rect x="2" y="5" width="2" height="1" fill="#00c000"/><rect x="7" y="4" width="2" height="1" fill="#d00000"/><rect x="11" y="4" width="2" height="1" fill="#d00000"/><rect x="2" y="12" width="2" height="2" fill="#202020"/><g shape-rendering="auto"><path d="M15.10 10.80 L13.27 11.95 L13.75 14.05 L11.65 13.57 L10.50 15.40 L9.35 13.57 L7.25 14.05 L7.73 11.95 L5.90 10.80 L7.73 9.65 L7.25 7.55 L9.35 8.03 L10.50 6.20 L11.65 8.03 L13.75 7.55 L13.27 9.65Z" fill="#ffff00" stroke="#303000" stroke-width=".8"/><circle cx="10.500" cy="10.800" r="1.300" fill="#fff" stroke="#404000" stroke-width=".6"/></g></svg><span style="left:123.00px;top:219px;font-size:11px;white-space:pre;color:#000;transform:scaleX(0.9780);transform-origin:0 0;">Task Configuration</span><svg style="position:absolute;left:106px;top:236px" width="9" height="9" viewBox="0 0 9 9" shape-rendering="crispEdges" ><rect x="0" y="0" width="9" height="9" fill="#a4c4cc"/><rect x="1" y="0" width="7" height="1" fill="#c4d8dc"/><rect x="1" y="8" width="7" height="1" fill="#b4b8b8"/><rect x="1" y="1" width="7" height="7" fill="#fff"/><rect x="1" y="5" width="7" height="1" fill="#f0f0f0"/><rect x="1" y="6" width="7" height="2" fill="#dcdcdc"/><rect x="2" y="4" width="5" height="1" fill="#000"/></svg><svg style="position:absolute;left:121px;top:233px" width="16" height="16" viewBox="0 0 16 16" shape-rendering="crispEdges" ><g shape-rendering="auto"><path d="M1.500 10.500 L8 7 L15 10.500 L6 15Z" fill="#fff" stroke="#000" stroke-width="1" stroke-linejoin="round"/><path d="M1.500 8.500 L8 5 L15 8.500 L6 13Z" fill="#fff" stroke="#000" stroke-width="1" stroke-linejoin="round"/><path d="M1.500 6.500 L9 2 L15 5.500 L6 11Z" fill="#fff" stroke="#000" stroke-width="1" stroke-linejoin="round"/><path d="M6.500 1 H9.500 V4 H11.500 L8 7.500 L4.500 4 H6.500Z" fill="#0000c0"/></g></svg><span style="left:142.02px;top:236px;font-size:11px;white-space:pre;color:#000;transform:scaleX(0.9778);transform-origin:0 0;">MainTask</span><svg style="position:absolute;left:141px;top:250px" width="16" height="16" viewBox="0 0 16 16" shape-rendering="crispEdges" ><g shape-rendering="auto"><path d="M2.500 0.500 H11 L14.500 4 V14.500 H2.500Z" fill="#fff" stroke="#404040"/><path d="M11 0.500 V4 H14.500" fill="none" stroke="#404040"/></g><rect x="14" y="4" width="1" height="11" fill="#000"/><rect x="2" y="14" width="13" height="1" fill="#000"/><rect x="10" y="6" width="3" height="1" fill="#909090"/><rect x="10" y="8" width="3" height="1" fill="#909090"/><rect x="10" y="10" width="3" height="1" fill="#909090"/><rect x="10" y="12" width="3" height="1" fill="#909090"/><g shape-rendering="auto"><rect x="5" y="7.500" width="4.500" height="3" fill="#fff" stroke="#0000a0"/><rect x="4.500" y="2.500" width="5" height="4" fill="#fff" stroke="#a00000"/><rect x="0.500" y="6.500" width="4" height="4" fill="#fff" stroke="#008000"/></g></svg><span style="left:162.14px;top:253px;font-size:11px;white-space:pre;color:#000;transform:scaleX(0.8600);transform-origin:0 0;">PLC_PRG</span><svg style="position:absolute;left:61px;top:267px" width="16" height="16" viewBox="0 0 16 16" shape-rendering="crispEdges" ><g shape-rendering="auto"><path d="M1.500 0.500 H10 L13.500 4 V15.500 H1.500Z" fill="#f4ecc0" stroke="#404040"/><path d="M2 1 H10 V15 H2Z" fill="#ffff00"/><path d="M10 0.500 V4 H13.500" fill="#fff" stroke="#404040"/></g><rect x="13" y="4" width="1" height="12" fill="#000"/><rect x="1" y="15" width="13" height="1" fill="#000"/><rect x="4" y="4" width="6" height="1" fill="#0000ff"/><rect x="4" y="6" width="6" height="1" fill="#0000ff"/><rect x="4" y="8" width="6" height="1" fill="#0000ff"/><rect x="4" y="10" width="6" height="1" fill="#0000ff"/><rect x="4" y="12" width="6" height="1" fill="#0000ff"/></svg><span style="left:81.99px;top:270px;font-size:11px;white-space:pre;color:#000;transform:scaleX(1.0099);transform-origin:0 0;">Safety parameter set</span><svg style="position:absolute;left:46px;top:287px" width="9" height="9" viewBox="0 0 9 9" shape-rendering="crispEdges" ><rect x="0" y="0" width="9" height="9" fill="#a4c4cc"/><rect x="1" y="0" width="7" height="1" fill="#c4d8dc"/><rect x="1" y="8" width="7" height="1" fill="#b4b8b8"/><rect x="1" y="1" width="7" height="7" fill="#fff"/><rect x="1" y="5" width="7" height="1" fill="#f0f0f0"/><rect x="1" y="6" width="7" height="2" fill="#dcdcdc"/><rect x="2" y="4" width="5" height="1" fill="#000"/></svg><svg style="position:absolute;left:61px;top:284px" width="16" height="16" viewBox="0 0 16 16" shape-rendering="crispEdges" ><g shape-rendering="auto"><path d="M4.500 5.500 L6.500 3.500 H11.500 V11.500 L9.500 13.500 H4.500Z" fill="#a8a8a8" stroke="#303030"/><path d="M4.500 5.500 H8.500 V13.500 H4.500Z" fill="#fff" stroke="#303030"/></g><rect x="6" y="7" width="1" height="1" fill="#000"/><rect x="6" y="9" width="1" height="1" fill="#000"/><rect x="6" y="11" width="1" height="1" fill="#000"/><rect x="11" y="4" width="1" height="8" fill="#000"/><rect x="4" y="13" width="6" height="1" fill="#000"/></svg><span style="left:82.02px;top:287px;font-size:11px;white-space:pre;color:#000;transform:scaleX(0.9786);transform-origin:0 0;">Systembus_Master (EtherCAT Master)</span><svg style="position:absolute;left:81px;top:301px" width="16" height="16" viewBox="0 0 16 16" shape-rendering="crispEdges" ><defs><linearGradient id="gd" x1="0" x2="1" y1="0" y2="0"><stop offset="0" stop-color="#fff"/><stop offset="1" stop-color="#a8a8a8"/></linearGradient></defs><g shape-rendering="auto"><path d="M2.5 4.500 L5.5 1.500 H6.5 V14.500 H2.5Z" fill="url(#gd)" stroke="#505050" stroke-width="1"/></g><rect x="6" y="2" width="1" height="13" fill="#000"/><rect x="2" y="14" width="5" height="1" fill="#000"/><g shape-rendering="auto"><circle cx="11.5" cy="9.500" r="2.600" fill="#000"/><circle cx="11.5" cy="9.500" r="0.900" fill="#f00000"/></g></svg><span style="left:102.01px;top:304px;font-size:11px;white-space:pre;color:#000;transform:scaleX(0.9876);transform-origin:0 0;">L_i950 (i950 ES Internal Slave (extended Safety))</span><svg style="position:absolute;left:61px;top:318px" width="24" height="16" viewBox="0 0 24 16" shape-rendering="crispEdges" ><rect x="0" y="4" width="4" height="9" fill="#000"/><g shape-rendering="auto"><path d="M3.500 8.500 L7 3 V14Z" fill="#fff" stroke="#000" stroke-width="1.700" stroke-linejoin="miter"/></g><rect x="7" y="2" width="1" height="13" fill="#000"/><rect x="2" y="8" width="1" height="1" fill="#ff0000"/><g shape-rendering="auto"><path d="M13 5 L17 3 H20.500 L22.500 5.500 V9 L18 13 L15 14.500 H12.500 L10 12 V8.500Z" fill="#0058b8"/><path d="M10 8 L13 5 H17.500 L20 7.500 V11.500 L17 14.500 H12.500 L10 12Z" fill="#1498ec"/><path d="M11 12 H13 V8 H16.500 V12 H18.500" fill="none" stroke="#0050a8" stroke-width="1.300"/></g></svg><span style="left:89.53px;top:321px;font-size:11px;white-space:pre;color:#000;transform:scaleX(0.9690);transform-origin:0 0;">Encoder_Axis (Encoder_Axis)</span><svg style="position:absolute;left:61px;top:335px" width="24" height="16" viewBox="0 0 24 16" shape-rendering="crispEdges" ><rect x="0" y="4" width="4" height="9" fill="#000"/><g shape-rendering="auto"><path d="M3.500 8.500 L7 3 V14Z" fill="#fff" stroke="#000" stroke-width="1.700" stroke-linejoin="miter"/></g><rect x="7" y="2" width="1" height="13" fill="#000"/><rect x="2" y="8" width="1" height="1" fill="#ff0000"/><g shape-rendering="auto"><path d="M9.500 11 L16 3.500 Q19.500 0.800 22.500 3.500 Q24.500 6.500 22 9 L14.500 15.500 Q11 16.500 9.500 15Z" fill="#1498ec"/><path d="M16 3.500 Q19.500 0.800 22.500 3.500 Q24.500 6.500 22 9 L20.500 10.300 Q16.500 9.500 14.800 5Z" fill="#0058b8"/><path d="M10.800 14.300 L14.500 10.600" stroke="#0050a8" stroke-width="1.800"/></g></svg><span style="left:89.52px;top:338px;font-size:11px;white-space:pre;color:#000;transform:scaleX(0.9806);transform-origin:0 0;">Motion_Axis (Motion_Axis)</span><svg style="position:absolute;left:61px;top:352px" width="16" height="16" viewBox="0 0 16 16" shape-rendering="crispEdges" ><rect x="3" y="1" width="4" height="1" fill="#505050"/><rect x="2" y="2" width="1" height="12" fill="#707070"/><rect x="3" y="2" width="2" height="11" fill="#fafafa"/><rect x="5" y="2" width="1" height="11" fill="#b4b4b4"/><rect x="6" y="2" width="1" height="12" fill="#000"/><rect x="2" y="13" width="5" height="1" fill="#000"/><g shape-rendering="auto"><path d="M11.500 1 L15 5.500 H12.800 V8 H10.200 V5.500 H8Z" fill="#b47c58"/><path d="M11.500 14.500 L15 10 H12.800 V7.500 H10.200 V10 H8Z" fill="#1494e4"/></g></svg><span style="left:82.01px;top:355px;font-size:11px;white-space:pre;color:#000;transform:scaleX(0.9858);transform-origin:0 0;">Digital_I_O (Digital I/Os i950)</span><svg style="position:absolute;left:61px;top:369px" width="16" height="16" viewBox="0 0 16 16" shape-rendering="crispEdges" ><rect x="3" y="1" width="4" height="1" fill="#505050"/><rect x="2" y="2" width="1" height="12" fill="#707070"/><rect x="3" y="2" width="2" height="11" fill="#fafafa"/><rect x="5" y="2" width="1" height="11" fill="#b4b4b4"/><rect x="6" y="2" width="1" height="12" fill="#000"/><rect x="2" y="13" width="5" height="1" fill="#000"/><g shape-rendering="auto"><path d="M11.500 1 L15.200 6 H12.800 V14 H10.200 V6 H7.800Z" fill="#00dc00"/></g></svg><span style="left:83.00px;top:372px;font-size:11px;white-space:pre;color:#000;transform:scaleX(0.9866);transform-origin:0 0;">Analog_I_O (Analog I/Os i950)</span><svg style="position:absolute;left:61px;top:386px" width="16" height="16" viewBox="0 0 16 16" shape-rendering="crispEdges" ><rect x="3" y="1" width="4" height="1" fill="#505050"/><rect x="2" y="2" width="1" height="12" fill="#707070"/><rect x="3" y="2" width="2" height="11" fill="#fafafa"/><rect x="5" y="2" width="1" height="11" fill="#b4b4b4"/><rect x="6" y="2" width="1" height="12" fill="#000"/><rect x="2" y="13" width="5" height="1" fill="#000"/><g shape-rendering="auto"><path d="M11.500 1 L15.200 6 H12.800 V14 H10.200 V6 H7.800Z" fill="#a07060"/></g></svg><span style="left:81.96px;top:389px;font-size:11px;white-space:pre;color:#000;transform:scaleX(1.0446);transform-origin:0 0;">SafetyInterface (SafetyInterface)</span><svg style="position:absolute;left:61px;top:403px" width="16" height="16" viewBox="0 0 16 16" shape-rendering="crispEdges" ><g shape-rendering="auto"><path d="M3.500 3.500 L6.500 0.500 H12.500 V11.500 L9.500 14.500 H3.500Z" fill="#989898" stroke="#484848"/><path d="M3.500 3.500 H9.500 V14.500 H3.500Z" fill="#e4e4e4" stroke="#484848"/><path d="M9.500 3.500 L12.500 0.500" stroke="#484848"/><path d="M4 3.500 L6.500 1 H12 L9.500 3.500Z" fill="#d0d0d0"/></g><rect x="6" y="5" width="1" height="1" fill="#00c000"/><rect x="6" y="7" width="1" height="1" fill="#00c000"/><rect x="6" y="9" width="1" height="1" fill="#00c000"/><rect x="6" y="11" width="1" height="1" fill="#00c000"/></svg><span style="left:82.02px;top:406px;font-size:11px;white-space:pre;color:#000;transform:scaleX(0.9814);transform-origin:0 0;">SystembusSlave (SystembusSlaveInterface)</span><svg style="position:absolute;left:61px;top:420px" width="16" height="16" viewBox="0 0 16 16" shape-rendering="crispEdges" ><g shape-rendering="auto"><path d="M3.500 3.500 L6.500 0.500 H12.500 V11.500 L9.500 14.500 H3.500Z" fill="#989898" stroke="#484848"/><path d="M3.500 3.500 H9.500 V14.500 H3.500Z" fill="#e4e4e4" stroke="#484848"/><path d="M9.500 3.500 L12.500 0.500" stroke="#484848"/><path d="M4 3.500 L6.500 1 H12 L9.500 3.500Z" fill="#d0d0d0"/></g><rect x="6" y="5" width="1" height="1" fill="#00c000"/><rect x="6" y="7" width="1" height="1" fill="#00c000"/><rect x="6" y="9" width="1" height="1" fill="#00c000"/><rect x="6" y="11" width="1" height="1" fill="#00c000"/></svg><span style="left:82.03px;top:423px;font-size:11px;white-space:pre;color:#000;transform:scaleX(0.9708);transform-origin:0 0;">FieldBus (FieldBusInterface)</span><svg style="position:absolute;left:61px;top:437px" width="16" height="16" viewBox="0 0 16 16" shape-rendering="crispEdges" ><g shape-rendering="auto"><path d="M3.500 1.500 L5 3.500 H8 L9.500 6 V9" fill="none" stroke="#0000d0" stroke-width="1.800"/><ellipse cx="9.500" cy="11" rx="3.300" ry="2.200" fill="#e8e8e8" stroke="#000"/><path d="M6.500 11.500 Q9.500 14.500 12.500 11.500" fill="none" stroke="#000" stroke-width="1.400"/></g></svg><span style="left:83.00px;top:440px;font-size:11px;white-space:pre;color:#000;transform:scaleX(0.9818);transform-origin:0 0;">VirtualAxes</span>
<svg style="position:absolute;left:535px;top:104px" width="11" height="7" viewBox="0 0 11 7" shape-rendering="crispEdges" ><path d="M0.5 1 L9.5 1 L5 5.5Z" fill="#d4d0c8" shape-rendering="auto"/></svg><svg style="position:absolute;left:556px;top:101px" width="10" height="11" viewBox="0 0 10 11" shape-rendering="crispEdges" ><rect x="3" y="1" width="4" height="1" fill="#d4d0c8"/><rect x="3" y="1" width="1" height="5" fill="#d4d0c8"/><rect x="5" y="1" width="2" height="5" fill="#d4d0c8"/><rect x="1" y="6" width="7" height="1" fill="#d4d0c8"/><rect x="4" y="7" width="1" height="3" fill="#d4d0c8"/></svg><svg style="position:absolute;left:577px;top:102px" width="9" height="9" viewBox="0 0 9 9" shape-rendering="crispEdges" ><path d="M0.800 0.800 L8.200 8.200 M8.200 0.800 L0.800 8.200" stroke="#d4d0c8" stroke-width="1.900" shape-rendering="auto"/></svg><div style="position:absolute;left:576px;top:114px;width:16px;height:16px;background:#d4d8d0;box-sizing:border-box;border-bottom:1px solid #a0a0a0"><svg style="position:absolute;left:4px;top:6px" width="9" height="5" viewBox="0 0 9 5" shape-rendering="crispEdges" ><path d="M0 0 L9 0 L4.500 4.500Z" fill="#000" shape-rendering="auto"/></svg></div>
<div style="position:absolute;left:593px;top:97px;width:4px;height:512px;background:#e4e2dc"></div>
<div style="position:absolute;left:0px;top:609px;width:1140px;height:4px;background:linear-gradient(to right,#d8d5cd,#eeece8)"></div>
<div style="position:absolute;left:597px;top:97px;width:543px;height:511px;background:#d4d0c8;box-sizing:border-box;border-left:1px solid #808080;border-top:1px solid #808080;border-bottom:1px solid #404040"></div><div style="position:absolute;left:598px;top:606px;width:542px;height:1px;background:#808080"></div><svg style="position:absolute;left:598px;top:99px" width="110" height="20" viewBox="0 0 110 20" shape-rendering="crispEdges" ><g shape-rendering="auto"><path d="M0 18.5 L3 18.5 L21 1.5 L101 1.5 Q103.5 1.5 103.5 4 L103.5 18.5" fill="#fff" stroke="#808080" stroke-width="1"/></g><rect x="0" y="18" width="110" height="1" fill="#fff"/></svg><div style="position:absolute;left:598px;top:117px;width:542px;height:1px;background:#fff"></div><div style="position:absolute;left:702px;top:117px;width:438px;height:1px;background:#808080"></div><div style="position:absolute;left:598px;top:117px;width:3px;height:1px;background:#808080"></div><svg style="position:absolute;left:617px;top:102px" width="16" height="16" viewBox="0 0 16 16" shape-rendering="crispEdges" ><defs><linearGradient id="gd" x1="0" x2="1" y1="0" y2="0"><stop offset="0" stop-color="#fff"/><stop offset="1" stop-color="#a8a8a8"/></linearGradient></defs><g shape-rendering="auto"><path d="M2.5 4.500 L5.5 1.500 H6.5 V14.500 H2.5Z" fill="url(#gd)" stroke="#505050" stroke-width="1"/></g><rect x="6" y="2" width="1" height="13" fill="#000"/><rect x="2" y="14" width="5" height="1" fill="#000"/><g shape-rendering="auto"><circle cx="11.5" cy="9.500" r="2.600" fill="#000"/><circle cx="11.5" cy="9.500" r="0.900" fill="#f00000"/></g></svg><span style="left:639.60px;top:103px;font-size:11px;white-space:pre;color:#000;transform:scaleX(1.0971);transform-origin:0 0;font-weight:bold;">Device</span><svg style="position:absolute;left:688px;top:106px" width="8" height="8" viewBox="0 0 8 8" shape-rendering="crispEdges" ><path d="M1.200 1.200 L6.800 6.800 M6.800 1.200 L1.200 6.800" stroke="#000" stroke-width="2.300" stroke-linecap="round" shape-rendering="auto"/></svg><div style="position:absolute;left:600px;top:122px;width:126px;height:19px;"><div style="position:absolute;left:2px;top:0px;width:122px;height:1px;background:#fff"></div><div style="position:absolute;left:1px;top:1px;width:1px;height:1px;background:#fff"></div><div style="position:absolute;left:0px;top:2px;width:1px;height:17px;background:#fff"></div><div style="position:absolute;left:124px;top:1px;width:1px;height:1px;background:#808080"></div><div style="position:absolute;left:124px;top:2px;width:1px;height:17px;background:#808080"></div><div style="position:absolute;left:125px;top:2px;width:1px;height:17px;background:#404040"></div></div><span style="left:604.74px;top:127px;font-size:11px;white-space:pre;color:#000;transform:scaleX(0.9644);transform-origin:0 0;">Communication Settings</span><div style="position:absolute;left:726px;top:122px;width:69px;height:19px;"><div style="position:absolute;left:2px;top:0px;width:65px;height:1px;background:#fff"></div><div style="position:absolute;left:1px;top:1px;width:1px;height:1px;background:#fff"></div><div style="position:absolute;left:0px;top:2px;width:1px;height:17px;background:#fff"></div><div style="position:absolute;left:67px;top:1px;width:1px;height:1px;background:#808080"></div><div style="position:absolute;left:67px;top:2px;width:1px;height:17px;background:#808080"></div><div style="position:absolute;left:68px;top:2px;width:1px;height:17px;background:#404040"></div></div><span style="left:732.00px;top:127px;font-size:11px;white-space:pre;color:#000;transform:scaleX(0.9492);transform-origin:0 0;">Applications</span><div style="position:absolute;left:795px;top:122px;width:42px;height:19px;"><div style="position:absolute;left:2px;top:0px;width:38px;height:1px;background:#fff"></div><div style="position:absolute;left:1px;top:1px;width:1px;height:1px;background:#fff"></div><div style="position:absolute;left:0px;top:2px;width:1px;height:17px;background:#fff"></div><div style="position:absolute;left:40px;top:1px;width:1px;height:1px;background:#808080"></div><div style="position:absolute;left:40px;top:2px;width:1px;height:17px;background:#808080"></div><div style="position:absolute;left:41px;top:2px;width:1px;height:17px;background:#404040"></div></div><span style="left:799.76px;top:127px;font-size:11px;white-space:pre;color:#000;transform:scaleX(0.9364);transform-origin:0 0;">Files</span><div style="position:absolute;left:837px;top:122px;width:42px;height:19px;"><div style="position:absolute;left:2px;top:0px;width:38px;height:1px;background:#fff"></div><div style="position:absolute;left:1px;top:1px;width:1px;height:1px;background:#fff"></div><div style="position:absolute;left:0px;top:2px;width:1px;height:17px;background:#fff"></div><div style="position:absolute;left:40px;top:1px;width:1px;height:1px;background:#808080"></div><div style="position:absolute;left:40px;top:2px;width:1px;height:17px;background:#808080"></div><div style="position:absolute;left:41px;top:2px;width:1px;height:17px;background:#404040"></div></div><span style="left:841.74px;top:127px;font-size:11px;white-space:pre;color:#000;transform:scaleX(0.9588);transform-origin:0 0;">Log</span><div style="position:absolute;left:879px;top:122px;width:72px;height:19px;"><div style="position:absolute;left:2px;top:0px;width:68px;height:1px;background:#fff"></div><div style="position:absolute;left:1px;top:1px;width:1px;height:1px;background:#fff"></div><div style="position:absolute;left:0px;top:2px;width:1px;height:17px;background:#fff"></div><div style="position:absolute;left:70px;top:1px;width:1px;height:1px;background:#808080"></div><div style="position:absolute;left:70px;top:2px;width:1px;height:17px;background:#808080"></div><div style="position:absolute;left:71px;top:2px;width:1px;height:17px;background:#404040"></div></div><span style="left:883.66px;top:127px;font-size:11px;white-space:pre;color:#000;transform:scaleX(0.9429);transform-origin:0 0;">PLC Settings</span><div style="position:absolute;left:951px;top:122px;width:55px;height:19px;"><div style="position:absolute;left:2px;top:0px;width:51px;height:1px;background:#fff"></div><div style="position:absolute;left:1px;top:1px;width:1px;height:1px;background:#fff"></div><div style="position:absolute;left:0px;top:2px;width:1px;height:17px;background:#fff"></div><div style="position:absolute;left:53px;top:1px;width:1px;height:1px;background:#808080"></div><div style="position:absolute;left:53px;top:2px;width:1px;height:17px;background:#808080"></div><div style="position:absolute;left:54px;top:2px;width:1px;height:17px;background:#404040"></div></div><span style="left:956.11px;top:127px;font-size:11px;white-space:pre;color:#000;transform:scaleX(0.8936);transform-origin:0 0;">PLC Shell</span><div style="position:absolute;left:1006px;top:122px;width:97px;height:19px;"><div style="position:absolute;left:2px;top:0px;width:93px;height:1px;background:#fff"></div><div style="position:absolute;left:1px;top:1px;width:1px;height:1px;background:#fff"></div><div style="position:absolute;left:0px;top:2px;width:1px;height:17px;background:#fff"></div><div style="position:absolute;left:95px;top:1px;width:1px;height:1px;background:#808080"></div><div style="position:absolute;left:95px;top:2px;width:1px;height:17px;background:#808080"></div><div style="position:absolute;left:96px;top:2px;width:1px;height:17px;background:#404040"></div></div><span style="left:1010.54px;top:127px;font-size:11px;white-space:pre;color:#000;transform:scaleX(0.9636);transform-origin:0 0;">Users and Groups</span><div style="position:absolute;left:1103px;top:122px;width:77px;height:19px;"><div style="position:absolute;left:2px;top:0px;width:73px;height:1px;background:#fff"></div><div style="position:absolute;left:1px;top:1px;width:1px;height:1px;background:#fff"></div><div style="position:absolute;left:0px;top:2px;width:1px;height:17px;background:#fff"></div><div style="position:absolute;left:75px;top:1px;width:1px;height:1px;background:#808080"></div><div style="position:absolute;left:75px;top:2px;width:1px;height:17px;background:#808080"></div><div style="position:absolute;left:76px;top:2px;width:1px;height:17px;background:#404040"></div></div><span style="left:1109.00px;top:127px;font-size:11px;white-space:pre;color:#000;transform:scaleX(0.8841);transform-origin:0 0;">Access Rights</span><div style="position:absolute;left:598px;top:141px;width:542px;height:1px;background:#fff"></div><div style="position:absolute;left:598px;top:141px;width:1px;height:465px;background:#fff"></div><span style="left:627.00px;top:160px;font-size:11px;white-space:pre;color:#000;transform:scaleX(1.0890);transform-origin:0 0;font-weight:bold;">Technology application (TA)</span><span style="left:625.00px;top:192px;font-size:11px;white-space:pre;color:#000;transform:scaleX(0.9767);transform-origin:0 0;">TA name</span><div style="position:absolute;left:773px;top:189px;width:263px;height:21px;background:#fff;box-sizing:border-box;border:1px solid;border-color:#808080 #fff #fff #808080;"><div style="position:absolute;left:0px;top:0px;width:261px;height:19px;box-sizing:border-box;border:1px solid;border-color:#404040 #d4d0c8 #d4d0c8 #404040;"></div><span style="left:3.00px;top:4px;font-size:11px;white-space:pre;color:#000;transform:scaleX(0.9444);transform-origin:0 0;">test</span></div><span style="left:625.00px;top:239px;font-size:11px;white-space:pre;color:#000;transform:scaleX(0.9755);transform-origin:0 0;">TA number</span><div style="position:absolute;left:773px;top:231px;width:129px;height:20px;background:#fff;box-sizing:border-box;border:1px solid;border-color:#808080 #fff #fff #808080;"><div style="position:absolute;left:0px;top:0px;width:127px;height:18px;box-sizing:border-box;border:1px solid;border-color:#404040 #d4d0c8 #d4d0c8 #404040;"></div><span style="left:3.06px;top:4px;font-size:11px;white-space:pre;color:#000;transform:scaleX(0.9412);transform-origin:0 0;">101</span></div><span style="left:624.51px;top:262px;font-size:11px;white-space:pre;color:#000;transform:scaleX(0.9910);transform-origin:0 0;">Resulting product code</span><div style="position:absolute;left:773px;top:258px;width:129px;height:21px;background:#d4d0c8;box-sizing:border-box;border:1px solid;border-color:#808080 #fff #fff #808080;"><div style="position:absolute;left:0px;top:0px;width:127px;height:19px;box-sizing:border-box;border:1px solid;border-color:#404040 #d4d0c8 #d4d0c8 #404040;"></div><span style="left:2.00px;top:4px;font-size:11px;white-space:pre;color:#000;transform:scaleX(1.0000);transform-origin:0 0;">16#1900C065</span></div><span style="left:625.00px;top:308px;font-size:11px;white-space:pre;color:#000;transform:scaleX(1.0000);transform-origin:0 0;">TA version</span><div style="position:absolute;left:773px;top:300px;width:129px;height:20px;background:#fff;box-sizing:border-box;border:1px solid;border-color:#808080 #fff #fff #808080;"><div style="position:absolute;left:0px;top:0px;width:127px;height:18px;box-sizing:border-box;border:1px solid;border-color:#404040 #d4d0c8 #d4d0c8 #404040;"></div><span style="left:3.00px;top:4px;font-size:11px;white-space:pre;color:#000;">1</span></div><span style="left:624.52px;top:331px;font-size:11px;white-space:pre;color:#000;transform:scaleX(0.9819);transform-origin:0 0;">Resulting version</span><div style="position:absolute;left:773px;top:327px;width:129px;height:21px;background:#d4d0c8;box-sizing:border-box;border:1px solid;border-color:#808080 #fff #fff #808080;"><div style="position:absolute;left:0px;top:0px;width:127px;height:19px;box-sizing:border-box;border:1px solid;border-color:#404040 #d4d0c8 #d4d0c8 #404040;"></div><span style="left:1.99px;top:4px;font-size:11px;white-space:pre;color:#000;transform:scaleX(1.0076);transform-origin:0 0;">16#00010301</span></div><div style="position:absolute;left:598px;top:349px;width:484px;height:226px;"><div style="position:absolute;left:0px;top:0px;width:484px;height:226px;background:#d4d0c8;box-sizing:border-box;border:1px solid;border-color:#d4d0c8 #404040 #404040 #d4d0c8"></div><div style="position:absolute;left:1px;top:1px;width:482px;height:224px;box-sizing:border-box;border:1px solid;border-color:#fff #808080 #808080 #fff"></div><div style="position:absolute;left:3px;top:3px;width:478px;height:18px;background:linear-gradient(to right,#0a246a,#000080 75%)"></div><div style="position:absolute;left:5px;top:4px;width:16px;height:16px;background:linear-gradient(#fff 60%,#e4e4e4)"><span style="left:2.17px;top:0px;font-size:7px;white-space:pre;color:#000;transform:scaleX(0.8333);transform-origin:0 0;">PLC</span><div style="position:absolute;left:13px;top:12px;width:1px;height:2px;background:#222"></div></div><span style="left:22.98px;top:6px;font-size:11px;white-space:pre;color:#fff;transform:scaleX(1.0200);transform-origin:0 0;font-weight:bold;">EASY Export...</span><div style="position:absolute;left:463px;top:5px;width:16px;height:14px;background:#d4d0c8;box-sizing:border-box;border:1px solid;border-color:#fff #404040 #404040 #fff"><div style="position:absolute;left:0px;top:0px;width:14px;height:12px;box-sizing:border-box;border:1px solid;border-color:transparent #808080 #808080 transparent"></div><svg style="position:absolute;left:3px;top:2px" width="8" height="7" viewBox="0 0 8 7" shape-rendering="crispEdges" ><path d="M0.7 0.3 L7.3 6.700 M7.3 0.3 L0.7 6.700" stroke="#000" stroke-width="1.700" shape-rendering="auto"/></svg></div><span style="left:27.30px;top:45px;font-size:11px;white-space:pre;color:#000;transform:scaleX(1.0918);transform-origin:0 0;font-weight:bold;">What shall be exported from selected devices?</span><svg style="position:absolute;left:27px;top:82px" width="12" height="12" viewBox="0 0 12 12" shape-rendering="crispEdges" ><g shape-rendering="auto"><circle cx="6" cy="6" r="5.5" fill="#fff"/><path d="M10 2 A5.5 5.5 0 0 0 2 10" fill="none" stroke="#808080" stroke-width="1"/><path d="M9.3 2.7 A4.5 4.5 0 0 0 2.7 9.3" fill="none" stroke="#404040" stroke-width="1"/><path d="M10 2 A5.5 5.5 0 0 1 2 10" fill="none" stroke="#fff" stroke-width="1"/><path d="M9.3 2.7 A4.5 4.5 0 0 1 2.7 9.3" fill="none" stroke="#d4d0c8" stroke-width="1"/></g></svg><span style="left:44.72px;top:83px;font-size:12px;white-space:pre;color:#000;transform:scaleX(0.8824);transform-origin:0 0;">Complete device application(*.lda; *.lfl)</span><svg style="position:absolute;left:27px;top:106px" width="12" height="12" viewBox="0 0 12 12" shape-rendering="crispEdges" ><g shape-rendering="auto"><circle cx="6" cy="6" r="5.5" fill="#fff"/><path d="M10 2 A5.5 5.5 0 0 0 2 10" fill="none" stroke="#808080" stroke-width="1"/><path d="M9.3 2.7 A4.5 4.5 0 0 0 2.7 9.3" fill="none" stroke="#404040" stroke-width="1"/><path d="M10 2 A5.5 5.5 0 0 1 2 10" fill="none" stroke="#fff" stroke-width="1"/><path d="M9.3 2.7 A4.5 4.5 0 0 1 2.7 9.3" fill="none" stroke="#d4d0c8" stroke-width="1"/></g></svg><span style="left:45.72px;top:107px;font-size:12px;white-space:pre;color:#000;transform:scaleX(0.8790);transform-origin:0 0;">Parameter (*.gdc; *.xml; *.csv; *.txt)</span><svg style="position:absolute;left:27px;top:129px" width="12" height="12" viewBox="0 0 12 12" shape-rendering="crispEdges" ><g shape-rendering="auto"><circle cx="6" cy="6" r="5.5" fill="#fff"/><path d="M10 2 A5.5 5.5 0 0 0 2 10" fill="none" stroke="#808080" stroke-width="1"/><path d="M9.3 2.7 A4.5 4.5 0 0 0 2.7 9.3" fill="none" stroke="#404040" stroke-width="1"/><path d="M10 2 A5.5 5.5 0 0 1 2 10" fill="none" stroke="#fff" stroke-width="1"/><path d="M9.3 2.7 A4.5 4.5 0 0 1 2.7 9.3" fill="none" stroke="#d4d0c8" stroke-width="1"/></g></svg><span style="left:45.70px;top:130px;font-size:12px;white-space:pre;color:#000;transform:scaleX(0.8969);transform-origin:0 0;">Device description (*.lpk)</span><svg style="position:absolute;left:27px;top:152px" width="12" height="12" viewBox="0 0 12 12" shape-rendering="crispEdges" ><g shape-rendering="auto"><circle cx="6" cy="6" r="5.5" fill="#fff"/><path d="M10 2 A5.5 5.5 0 0 0 2 10" fill="none" stroke="#808080" stroke-width="1"/><path d="M9.3 2.7 A4.5 4.5 0 0 0 2.7 9.3" fill="none" stroke="#404040" stroke-width="1"/><path d="M10 2 A5.5 5.5 0 0 1 2 10" fill="none" stroke="#fff" stroke-width="1"/><path d="M9.3 2.7 A4.5 4.5 0 0 1 2.7 9.3" fill="none" stroke="#d4d0c8" stroke-width="1"/><circle cx="6" cy="6" r="2" fill="#000"/></g></svg><span style="left:45.72px;top:153px;font-size:12px;white-space:pre;color:#000;transform:scaleX(0.8824);transform-origin:0 0;">EtherCAT device description (*.xml)</span><div style="position:absolute;left:313px;top:188px;width:75px;height:23px;background:#000"></div><div style="position:absolute;left:314px;top:189px;width:73px;height:21px;background:#d4d0c8;box-sizing:border-box;border:1px solid;border-color:#fff #404040 #404040 #fff"><div style="position:absolute;left:0px;top:0px;width:71px;height:19px;box-sizing:border-box;border:1px solid;border-color:transparent #808080 #808080 transparent"></div></div><span style="left:334.45px;top:194px;font-size:12px;white-space:pre;color:#000;transform:scaleX(0.8529);transform-origin:0 0;">Export</span><div style="position:absolute;left:394px;top:188px;width:75px;height:23px;background:#d4d0c8;box-sizing:border-box;border:1px solid;border-color:#fff #404040 #404040 #fff"><div style="position:absolute;left:0px;top:0px;width:73px;height:21px;box-sizing:border-box;border:1px solid;border-color:transparent #808080 #808080 transparent"></div></div><span style="left:412.38px;top:194px;font-size:12px;white-space:pre;color:#000;transform:scaleX(0.9167);transform-origin:0 0;">Cancel</span></div>
<div style="position:absolute;left:0px;top:613px;width:1140px;height:16px;background:#808080"></div>
<span style="left:4.54px;top:615px;font-size:11px;white-space:pre;color:#d4d0c8;transform:scaleX(0.9628);transform-origin:0 0;">EtherCAT Log Messages</span>
<div style="position:absolute;left:0px;top:629px;width:1140px;height:23px;background:#d4d0c8"></div>
<span style="left:3.48px;top:635px;font-size:11px;white-space:pre;color:#000;transform:scaleX(1.0164);transform-origin:0 0;">Network Master Interface</span>
<div style="position:absolute;left:133px;top:631px;width:1012px;height:21px;background:#fff;box-sizing:border-box;border:1px solid;border-color:#808080 #fff #fff #808080;"><div style="position:absolute;left:0px;top:0px;width:1010px;height:19px;box-sizing:border-box;border:1px solid;border-color:#404040 #d4d0c8 #d4d0c8 #404040;"></div><span style="left:3.03px;top:5px;font-size:11px;white-space:pre;color:#000;transform:scaleX(0.9692);transform-origin:0 0;">Device.Systembus_Master</span></div>
</body></html>
